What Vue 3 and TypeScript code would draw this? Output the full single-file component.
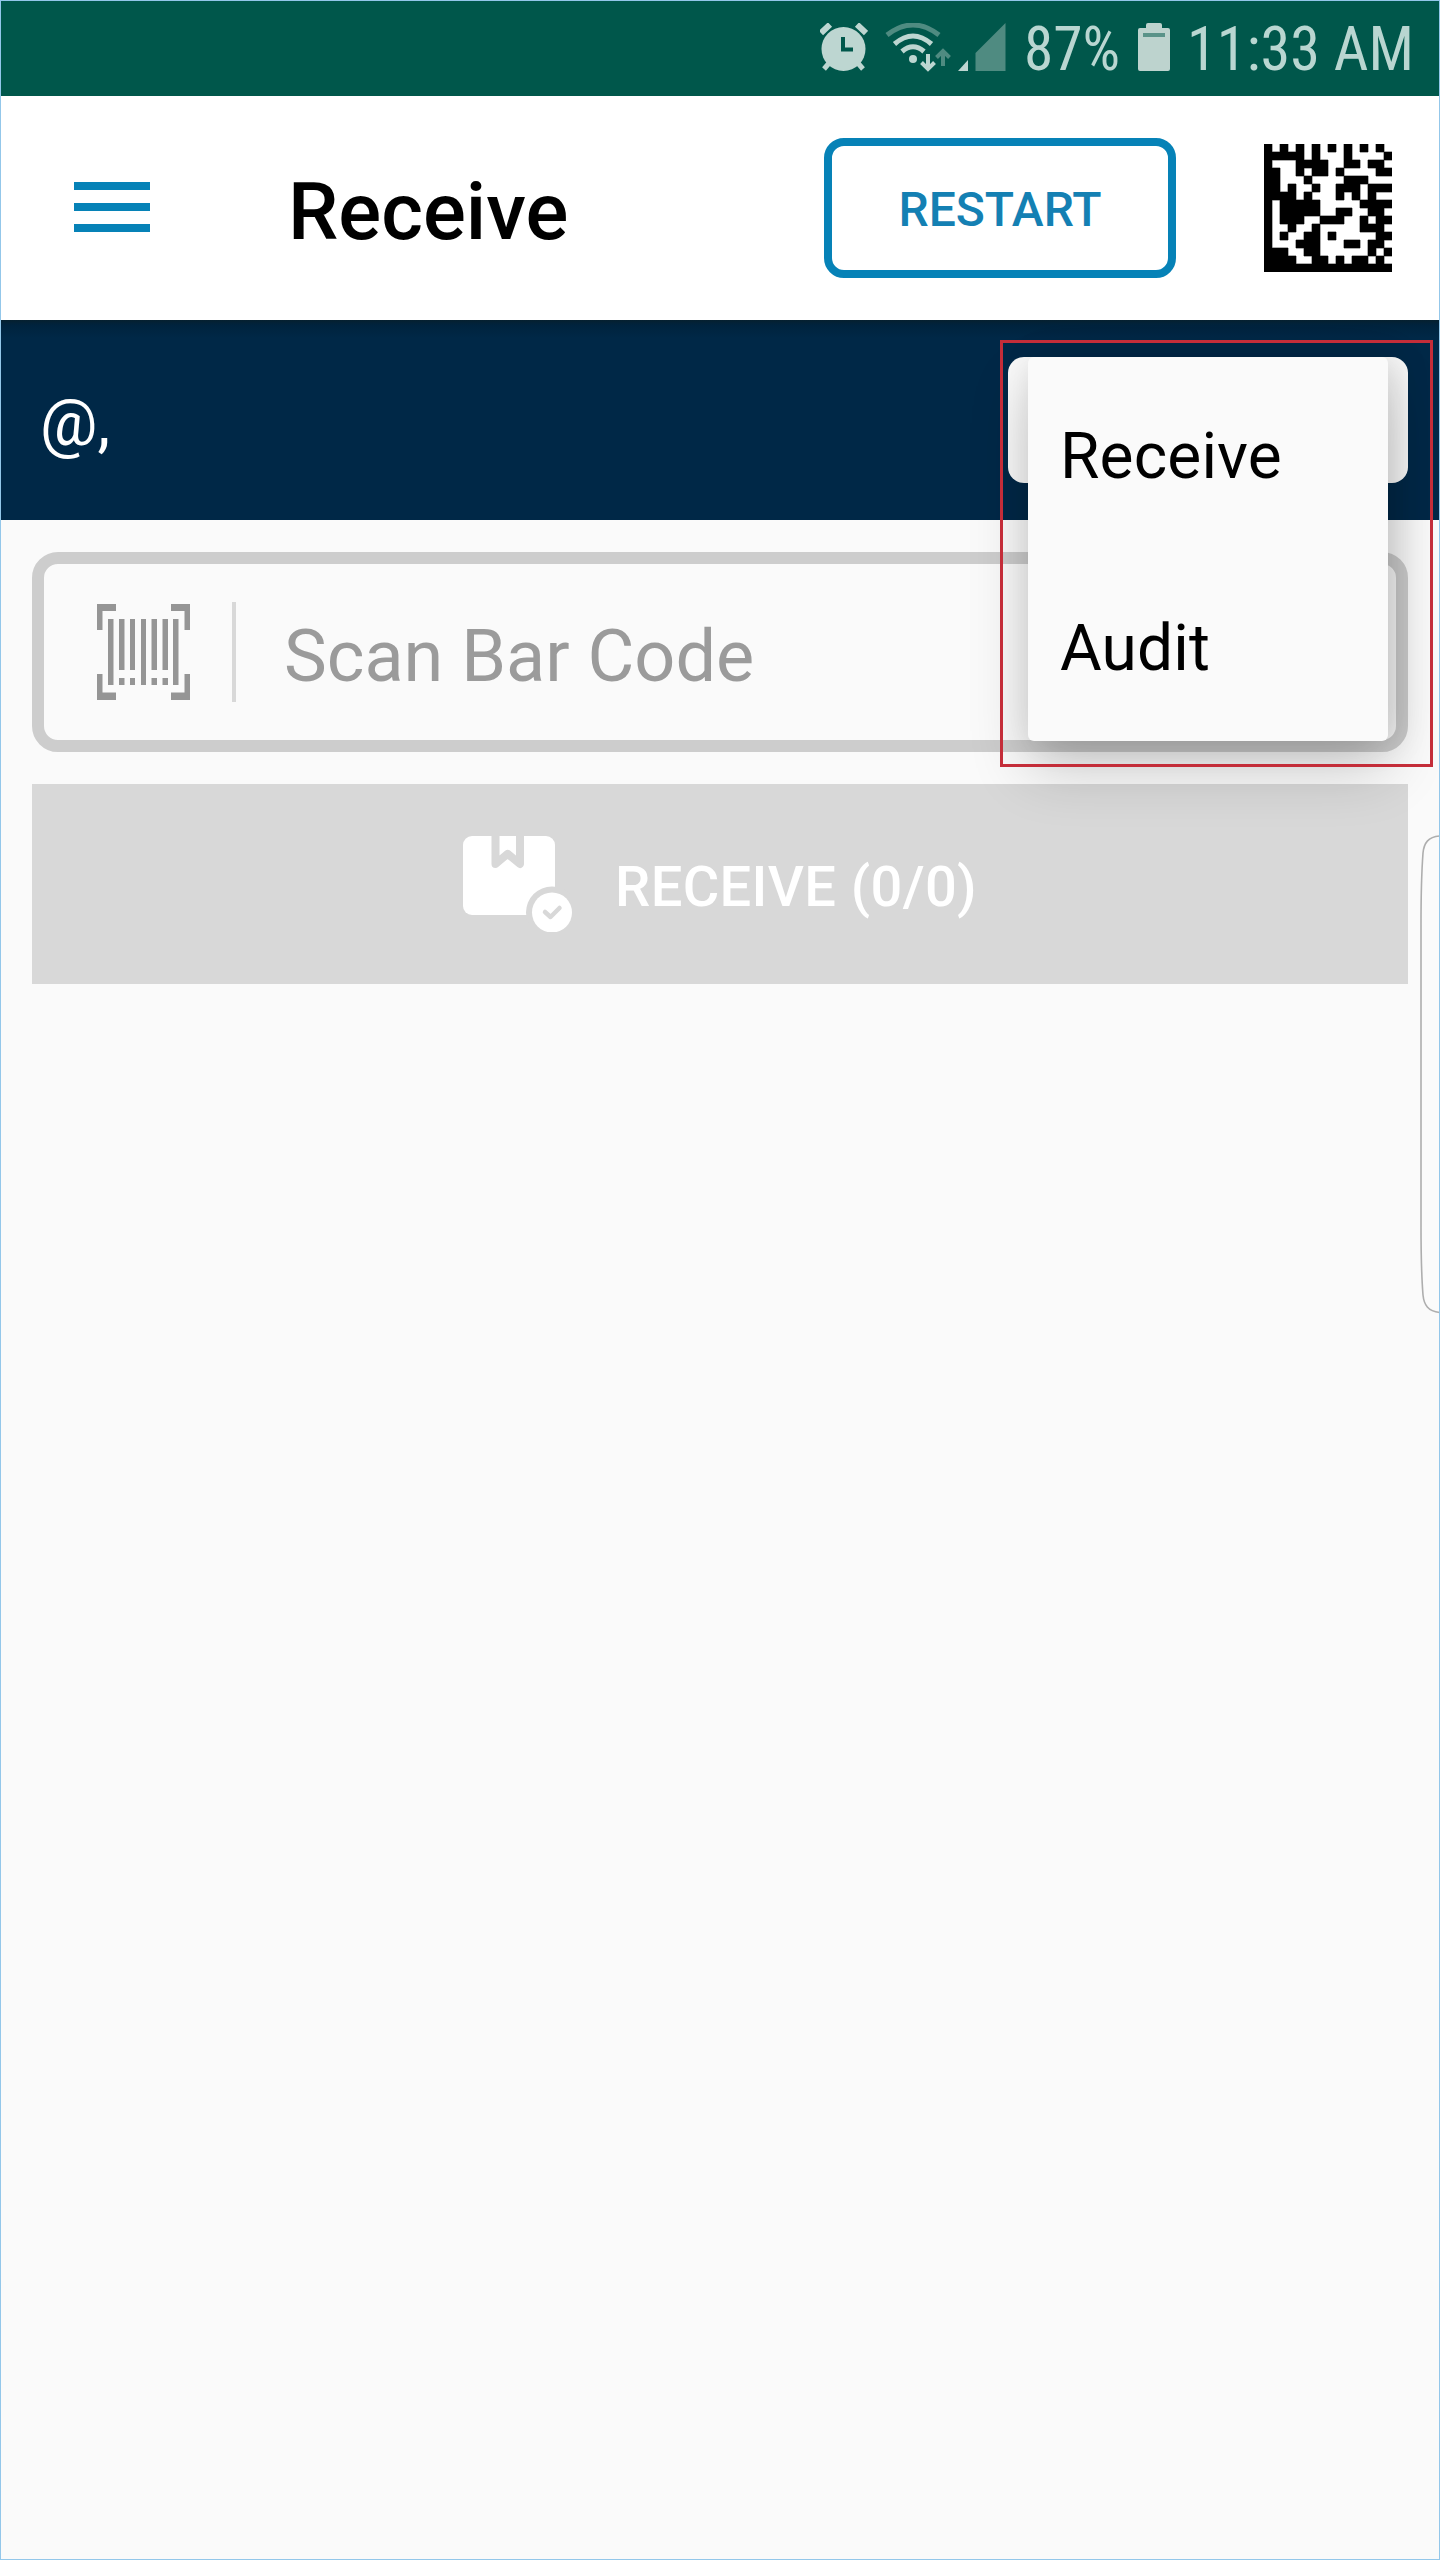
<script setup lang="ts">
const title = 'Receive'
const menuItems: string[] = ['Receive', 'Audit']

// Data matrix modules, one string per row, 1 = dark
const matrix: string[] = [
  '1010101010101010',
  '1111101000100001',
  '1000111100110110',
  '1100101101000011',
  '1100010000111000',
  '1101001001110111',
  '1111010001010100',
  '1011111000001111',
  '1011111001100110',
  '1011100111001011',
  '1001001000001110',
  '1010011010000011',
  '1000111000110110',
  '1110011000000101',
  '1111001101011010',
  '1111111111111111',
]

const matrixPath: string = matrix
  .map((row, y) =>
    [...row].map((cell, x) => (cell === '1' ? `M${x} ${y}h1v1h-1z` : '')).join(''),
  )
  .join('')
</script>

<template>
  <div class="screen">
    <div class="status">
      <svg class="alarm" width="48" height="48" viewBox="0 0 48 48">
        <circle cx="23.5" cy="26" r="22" fill="#bdd6d1" />
        <path d="M1 10 10 1.500M37 1.500 46 10" stroke="#bdd6d1" stroke-width="6" />
        <path d="M4 46 10 39M43 46 37 39" stroke="#bdd6d1" stroke-width="5" />
        <path d="M23 14V26.500H33" fill="none" stroke="#00574b" stroke-width="4" />
      </svg>
      <svg class="wifi" width="66" height="50" viewBox="0 0 66 50">
        <g fill="none" stroke="#bdd6d1">
          <path d="M2 12Q28 -8 54 12" stroke="#4f8b81" stroke-width="5" />
          <path d="M9.500 21Q28 5 46.500 21" stroke-width="5" />
          <path d="M17 28.500Q28 19 39 28.500" stroke-width="5" />
          <path d="M43 31V45M36.500 39.500 43 46 49.500 39.500" stroke-width="4" />
          <path d="M58 43V29M51.500 34.500 58 28 64.500 34.500" stroke="#4f8b81" stroke-width="4" />
        </g>
        <circle cx="28" cy="36" r="4" fill="#bdd6d1" />
      </svg>
      <svg class="signal" width="48" height="48" viewBox="0 0 48 48">
        <path d="M0 48 10 37V48z" fill="#bdd6d1" />
        <path d="M17.500 48V30L47.500 0V48z" fill="#4f8b81" />
      </svg>
      <svg class="pct" width="108" height="96">
        <text x="6" y="70" textLength="96" lengthAdjust="spacingAndGlyphs">87%</text>
      </svg>
      <svg class="battery" width="32" height="48" viewBox="0 0 32 48">
        <path d="M8 5V2Q8 0 10 0H22Q24 0 24 2V5H30Q32 5 32 7V46Q32 48 30 48H2Q0 48 0 46V7Q0 5 2 5z" fill="#bdd3ce" />
        <path d="M5 10H27V14H5z" fill="#5a9389" />
      </svg>
      <svg class="clock" width="240" height="96">
        <text x="6" y="70" textLength="227" lengthAdjust="spacingAndGlyphs">11:33 AM</text>
      </svg>
    </div>

    <header class="appbar">
      <svg class="burger" width="76" height="50" viewBox="0 0 76 50">
        <path d="M0 0H76V8H0zM0 21H76V29H0zM0 42H76V50H0z" fill="#0682b7" />
      </svg>
      <h1>{{ title }}</h1>
      <button class="restart">RESTART</button>
      <svg class="matrix" width="128" height="128" viewBox="0 0 16 16">
        <path :d="matrixPath" fill="none" stroke="#555" stroke-width="0.12" />
        <path :d="matrixPath" fill="#000" shape-rendering="crispEdges" />
      </svg>
    </header>

    <section class="location">
      <span class="place">@,</span>
      <div class="spinner">
        <div class="menu">
          <div v-for="item in menuItems" :key="item" class="item">{{ item }}</div>
        </div>
        <div class="highlight"></div>
      </div>
    </section>

    <main>
      <div class="scan">
        <svg class="barcode" width="93" height="96" viewBox="0 0 93 96">
          <path
            d="M0 0H19V7H5.500V26H0zM74 0H93V26H87.500V7H74zM0 70H5.500V88.500H19V96H0zM87.500 70H93V96H74V88.500H87.500zM11 15H16.500V81H11zM22 15H27.500V66H22zM33 15H38V66H33zM44 15H49V81H44zM54.500 15H60V66H54.500zM65.500 15H71V66H65.500zM76 15H81.500V81H76zM22 74H27.500V81H22zM33 74H38V81H33zM54.500 74H60V81H54.500zM65.500 74H71V81H65.500z"
            fill="#959595"
          />
        </svg>
        <span class="rule"></span>
        <span class="hint">Scan Bar Code</span>
      </div>
      <button class="receive">
        <svg width="110" height="96" viewBox="0 0 110 96">
          <rect width="92" height="79" rx="9" fill="#fff" />
          <path d="M32.500 -4V28L44.700 17.800 57 28V-4" fill="none" stroke="#d8d8d8" stroke-width="8" stroke-linejoin="round" />
          <circle cx="89" cy="76.500" r="26" fill="#d8d8d8" />
          <circle cx="89" cy="76.500" r="20" fill="#fff" />
          <path d="M82 76 87.500 81 96.500 72" fill="none" stroke="#d8d8d8" stroke-width="4.500" stroke-linecap="round" stroke-linejoin="round" />
        </svg>
        <span>RECEIVE (0/0)</span>
      </button>
    </main>

    <svg class="edge" width="20" height="480" viewBox="0 0 20 480">
      <path d="M19.500 1C8 2 4 8 3 18Q1 45 1 90V390Q1 435 3 460C4 470 8 476 19.500 477.500" fill="#fbfbfb" stroke="#aeaeae" stroke-width="1.600" />
    </svg>
    <div class="frame"></div>
  </div>
</template>

<style>
body {
  background: #fafafa;
}
</style>

<style scoped>
* {
  box-sizing: border-box;
}

.screen {
  position: relative;
  width: 1440px;
  height: 2560px;
  overflow: hidden;
  background: #fafafa;
  font-family: Roboto, 'Liberation Sans', sans-serif;
  color: #000;
}

svg {
  display: block;
  flex: none;
}

.status {
  display: flex;
  height: 96px;
  background: #00574b;
}

.status text {
  font-family: 'Roboto Condensed', Roboto, sans-serif;
  font-size: 61px;
  fill: #b9d6d1;
}

.alarm {
  margin: 23px 0 0 820px;
}

.wifi {
  margin: 23px 0 0 17px;
}

.signal {
  margin: 23px 0 0 7px;
}

.pct {
  margin-left: 12px;
  overflow: visible;
}

.battery {
  margin: 23px 0 0 12px;
}

.clock {
  margin-left: 11px;
  overflow: visible;
}

.appbar {
  display: flex;
  align-items: center;
  height: 224px;
  padding-left: 74px;
  background: #fff;
}

.burger {
  margin-top: -2px;
}

h1 {
  width: 536px;
  margin: 0;
  padding: 7px 0 0 138px;
  font-size: 80px;
  font-weight: 500;
  line-height: 100px;
}

button {
  margin: 0;
  border: 0;
  font-family: inherit;
  font-weight: 500;
}

.restart {
  width: 352px;
  height: 140px;
  margin-left: 138px;
  padding: 3px 0 0;
  border: 8px solid #0682b7;
  border-radius: 20px;
  background: transparent;
  color: #1480b3;
  font-size: 48px;
}

.matrix {
  margin-left: 88px;
}

.location {
  display: flex;
  justify-content: space-between;
  height: 200px;
  padding: 37px 32px 0 40px;
  background: linear-gradient(#06202f 0, #00233d 5px, #002847 18px);
}

.place {
  height: 126px;
  padding-top: 4px;
  color: #fff;
  font-size: 64px;
  line-height: 126px;
}

.spinner {
  position: relative;
  width: 400px;
  height: 126px;
  border-radius: 16px;
  background: #fafafa;
}

.menu {
  position: absolute;
  z-index: 2;
  top: 0;
  left: 20px;
  width: 360px;
  height: 384px;
  border-radius: 6px;
  background: #fafafa;
  box-shadow: 0 28px 60px rgba(0, 0, 0, 0.2), 8px 0 36px rgba(0, 0, 0, 0.12);
}

.item {
  height: 192px;
  padding: 7px 0 0 32px;
  font-size: 64px;
  line-height: 186px;
  letter-spacing: 0.15px;
}

.highlight {
  position: absolute;
  z-index: 3;
  top: -17px;
  left: -8px;
  width: 433px;
  height: 427px;
  border: 3px solid #c42d39;
}

main {
  display: flex;
  flex-direction: column;
  gap: 32px;
  padding: 32px;
}

.scan {
  display: flex;
  align-items: center;
  height: 200px;
  padding-left: 53px;
  border: 12px solid #cdcdcd;
  border-radius: 26px;
}

.rule {
  width: 4px;
  height: 100px;
  margin-left: 42px;
  background: #d8d8d8;
}

.hint {
  margin-left: 48px;
  padding-top: 10px;
  color: #9b9b9b;
  font-size: 72px;
  line-height: 90px;
}

.receive {
  display: flex;
  align-items: center;
  height: 200px;
  padding: 0 0 0 431px;
  background: #d8d8d8;
  color: #fff;
  font-size: 56px;
}

.receive span {
  margin-left: 42px;
  padding-top: 6px;
  line-height: 70px;
  letter-spacing: 0.38px;
}

.edge {
  position: absolute;
  top: 835px;
  right: 0;
}

.frame {
  position: absolute;
  z-index: 4;
  inset: 0;
  border: 1px solid #93c7ea;
  pointer-events: none;
}
</style>
